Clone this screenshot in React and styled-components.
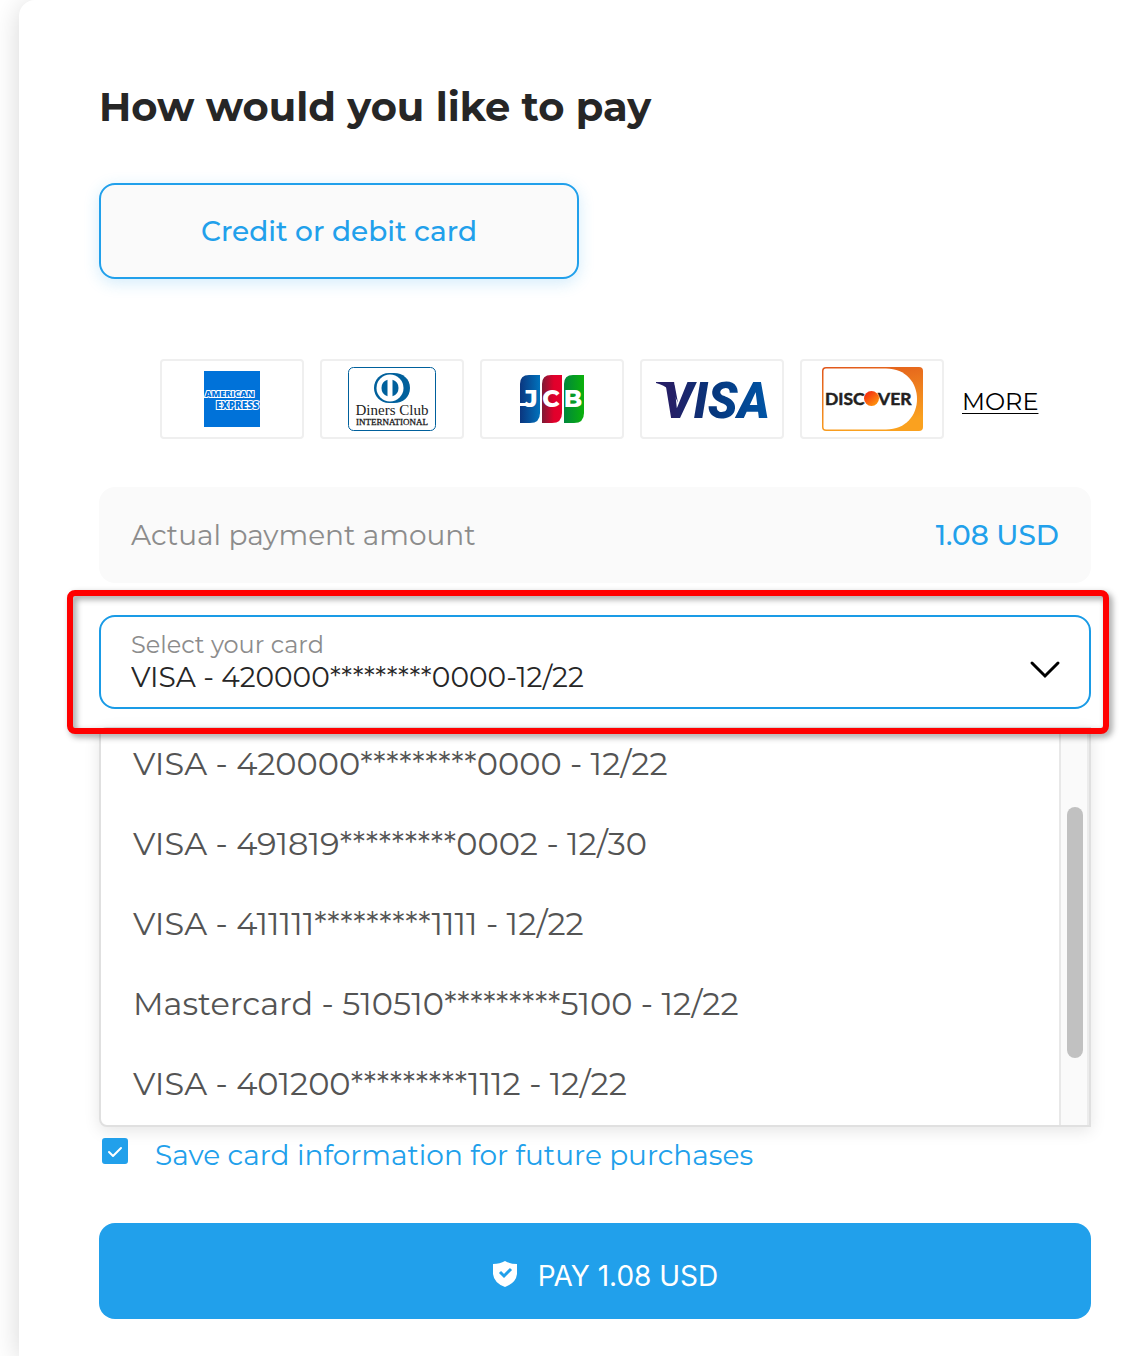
import React, { useState } from "react";
import styled, { createGlobalStyle } from "styled-components";

const blue = "#21a0eb";

const GlobalStyle = createGlobalStyle`
  *, *::before, *::after { box-sizing: border-box; }
  body {
    margin: 0;
    background: #ffffff;
    color: #262626;
    font-family: Montserrat, Inter, "Liberation Sans", sans-serif;
  }
  button, select, input { font: inherit; color: inherit; }
`;

const Page = styled.div`
  padding-left: 19px;
  overflow: hidden;
`;

const Card = styled.form`
  display: flex;
  flex-direction: column;
  min-height: 100vh;
  padding: 81px 49px 37px 80px;
  border-radius: 16px 0 0 0;
  background: #ffffff;
  box-shadow: 0 4px 28px rgba(0, 0, 0, 0.16);
`;

const Title = styled.h1`
  margin: 0;
  font-size: 40px;
  line-height: 52px;
  font-weight: 700;
`;

const MethodButton = styled.button`
  width: 480px;
  max-width: 100%;
  height: 96px;
  margin-top: 50px;
  border: 2px solid ${blue};
  border-radius: 16px;
  background: #fafafa;
  box-shadow: 0 4px 16px rgba(33, 160, 235, 0.2);
  color: ${blue};
  font-size: 28px;
  font-weight: 500;
`;

const Brands = styled.div`
  display: flex;
  align-items: center;
  gap: 16px;
  margin-top: 80px;
  padding-left: 61px;
`;

const Brand = styled.div`
  display: flex;
  align-items: center;
  justify-content: center;
  width: 144px;
  height: 80px;
  border: 2px solid #efefef;
  border-radius: 4px;
  background: #ffffff;
`;

const MoreLink = styled.a`
  padding: 6px 2px 0;
  color: #000000;
  font-size: 24px;
  line-height: 32px;
  text-underline-offset: 3px;
  text-decoration-thickness: 1px;
`;

const AmountBar = styled.div`
  display: flex;
  align-items: center;
  justify-content: space-between;
  height: 96px;
  margin-top: 48px;
  padding: 0 32px;
  border-radius: 16px;
  background: #fafafa;
  color: #8c8c8c;
  font-size: 28px;
`;

const Amount = styled.strong`
  color: ${blue};
  font-weight: 500;
`;

const SelectArea = styled.div`
  position: relative;
  z-index: 1;
  margin-top: 32px;
`;

const SelectBox = styled.div`
  display: grid;
  grid-template-columns: 1fr 32px;
  align-items: center;
  height: 94px;
  padding: 0 28px 0 30px;
  border: 2px solid #1a9be6;
  border-radius: 16px;
  background: #ffffff;
`;

const Field = styled.div`
  display: flex;
  flex-direction: column;
`;

const FieldLabel = styled.label`
  padding-top: 2px;
  color: #8c8c8c;
  font-size: 24px;
  line-height: 28px;
`;

const CardSelect = styled.select`
  width: 100%;
  height: 36px;
  padding: 0;
  border: 0;
  outline: 0;
  appearance: none;
  background: transparent;
  color: #262626;
  font-size: 28px;
`;

const Chevron = styled.svg`
  margin-top: 14px;
  fill: none;
  stroke: #000000;
  stroke-width: 3px;
  stroke-linecap: round;
`;

const Highlight = styled.div`
  position: absolute;
  inset: -25px -18px -25px -32px;
  border: 6px solid #ff0000;
  border-radius: 8px;
  filter: drop-shadow(3px 3px 3px rgba(0, 0, 0, 0.4));
  pointer-events: none;
`;

const Menu = styled.div`
  display: grid;
  grid-template-columns: 1fr 30px;
  height: 400px;
  margin-top: 18px;
  border: 2px solid #e0e0e0;
  border-radius: 8px 0 0 8px;
  background: #ffffff;
  box-shadow: 0 4px 16px rgba(0, 0, 0, 0.1);
`;

const Options = styled.ul`
  display: flex;
  flex-direction: column;
  justify-content: flex-end;
  min-height: 0;
  margin: 0;
  padding: 0 0 1px;
  overflow: hidden;
  list-style: none;
`;

const Option = styled.li`
  flex: none;
  padding: 0 32px;
  color: #545454;
  font-size: 32px;
  line-height: 80px;
  cursor: pointer;
`;

const Track = styled.div`
  padding: 78px 4px 0 6px;
  border-left: 2px solid #e8e8e8;
  border-right: 2px solid #ececec;
  background: #fafafa;
`;

const Thumb = styled.div`
  width: 16px;
  height: 251px;
  border-radius: 8px;
  background: #c1c1c1;
`;

const SaveRow = styled.label`
  display: flex;
  align-items: center;
  gap: 27px;
  margin-top: 10px;
  padding-left: 3px;
  color: ${blue};
  font-size: 28px;
  line-height: 36px;
`;

const CheckHolder = styled.span`
  display: grid;
  width: 26px;
  height: 26px;
  margin-bottom: 8px;

  > * { grid-area: 1 / 1; }
  svg { pointer-events: none; }
`;

const Checkbox = styled.input`
  width: 26px;
  height: 26px;
  margin: 0;
  appearance: none;
  border: 2px solid ${blue};
  border-radius: 3px;

  &:checked { background: ${blue}; }
`;

const PayButton = styled.button`
  display: flex;
  align-items: center;
  justify-content: center;
  gap: 20px;
  height: 96px;
  margin-top: 50px;
  padding: 10px 0 0 20px;
  border: 0;
  border-radius: 16px;
  background: ${blue};
  color: #ffffff;
  font-family: Inter, sans-serif;
  font-size: 28px;
  font-weight: 400;
`;

const Shield = styled.svg`
  margin-bottom: 4px;
`;

const Amex = () => (
  <svg width="56" height="56" viewBox="0 0 56 56" role="img" aria-label="American Express">
    <rect width="56" height="56" fill="#0072d9" />
    <g fontFamily="'Open Sans', sans-serif" fontWeight="800" fill="#0072d9" stroke="#ffffff" strokeWidth="2" paintOrder="stroke">
      <text x="1" y="26" fontSize="9">AMERICAN</text>
      <text x="12" y="38" fontSize="10">EXPRESS</text>
    </g>
  </svg>
);

const Diners = () => (
  <svg width="88" height="64" viewBox="0 0 88 64" role="img" aria-label="Diners Club International">
    <rect x="0.5" y="0.5" width="87" height="63" rx="5" fill="#fff" stroke="#00609c" />
    <path d="M41 6h5c9 0 16 6 16 15s-7 15-16 15h-5c-9 0-15-7-15-15S32 6 41 6Z" fill="#00609c" />
    <circle cx="42" cy="21" r="13.5" fill="#fff" />
    <path d="M39.5 12.8a8.6 8.6 0 0 0 0 16.4ZM44.5 12.8a8.6 8.6 0 0 1 0 16.4Z" fill="#00609c" />
    <g fontFamily="'Liberation Serif', serif" fill="#1c1c1c" textAnchor="middle">
      <text x="44" y="48" fontSize="15">Diners Club</text>
      <text x="44" y="58" fontSize="9" stroke="#1c1c1c" strokeWidth="0.3">INTERNATIONAL</text>
    </g>
  </svg>
);

const Jcb = () => (
  <svg width="64" height="48" viewBox="0 0 64 48" role="img" aria-label="JCB">
    <defs>
      <linearGradient id="jcbBlue"><stop stopColor="#0b367f" /><stop offset="1" stopColor="#0072bc" /></linearGradient>
      <linearGradient id="jcbRed"><stop stopColor="#7d1a35" /><stop offset="0.6" stopColor="#e1002b" /><stop offset="1" stopColor="#e6002d" /></linearGradient>
      <linearGradient id="jcbGreen"><stop stopColor="#00873c" /><stop offset="1" stopColor="#0bb10b" /></linearGradient>
    </defs>
    <path d="M0 9Q0 0 9 0H20V38Q20 48 10 48H0Z" fill="url(#jcbBlue)" />
    <path d="M22 9Q22 0 31 0H42V38Q42 48 32 48H22Z" fill="url(#jcbRed)" />
    <path d="M44 9Q44 0 53 0H64V38Q64 48 54 48H44Z" fill="url(#jcbGreen)" />
    <path d="M0 28H8V31H0Z" fill="#fff" />
    <g fontFamily="Montserrat, 'DejaVu Sans', sans-serif" fontWeight="800" fontSize="24" fill="#fff" textAnchor="middle">
      <text x="11" y="32">J</text>
      <text x="31" y="32">C</text>
      <text x="53" y="32">B</text>
    </g>
  </svg>
);

const Visa = () => (
  <svg width="120" height="48" viewBox="-4 -4 120 48" role="img" aria-label="Visa">
    <defs>
      <linearGradient id="visaInk" gradientUnits="userSpaceOnUse" x1="0" y1="0" x2="112" y2="0">
        <stop offset="0.15" stopColor="#241f66" /><stop offset="0.5" stopColor="#06357b" /><stop offset="1" stopColor="#0055a6" />
      </linearGradient>
    </defs>
    <path d="M0 3H13Q18 3 19 8L22 24Q16 8 0 4Z" fill="url(#visaInk)" />
    <text x="6" y="39" fontFamily="Roboto, sans-serif" fontSize="49" fontWeight="900" fontStyle="italic" fill="url(#visaInk)">VISA</text>
  </svg>
);

const Discover = () => (
  <svg width="101" height="64" viewBox="0 0 101 64" role="img" aria-label="Discover">
    <defs>
      <linearGradient id="discoverEdge" x2="0.3" y2="1"><stop stopColor="#e0561c" /><stop offset="1" stopColor="#faa11f" /></linearGradient>
      <linearGradient id="discoverDot" x2="0.8" y2="1"><stop stopColor="#f21b12" /><stop offset="1" stopColor="#ff9a0c" /></linearGradient>
    </defs>
    <rect width="101" height="64" rx="4" fill="url(#discoverEdge)" />
    <path d="M4 1.5H64C84 1.5 95 16 95 32S84 62.5 64 62.5H4Q1.5 62.5 1.5 60V4Q1.5 1.5 4 1.5Z" fill="#fff" />
    <circle cx="49.5" cy="31.5" r="7.5" fill="url(#discoverDot)" />
    <g fontFamily="Lato, sans-serif" fontSize="17.5" fontWeight="700" fill="#231f20" stroke="#231f20" strokeWidth="0.5">
      <text x="3" y="38">DISC</text>
      <text x="56" y="38">VER</text>
    </g>
  </svg>
);

const CARDS = [
  "VISA - 420000*********0000 - 12/22",
  "VISA - 491819*********0002 - 12/30",
  "VISA - 411111*********1111 - 12/22",
  "Mastercard - 510510*********5100 - 12/22",
  "VISA - 401200*********1112 - 12/22",
];

const BRANDS = [Amex, Diners, Jcb, Visa, Discover];

export default function App() {
  const [selected, setSelected] = useState(0);
  const [save, setSave] = useState(true);

  return (
    <Page>
      <GlobalStyle />
      <Card onSubmit={(e) => e.preventDefault()}>
        <Title>How would you like to pay</Title>
        <MethodButton type="button">Credit or debit card</MethodButton>
        <Brands>
          {BRANDS.map((Logo, i) => <Brand key={i}><Logo /></Brand>)}
          <MoreLink href="#more">MORE</MoreLink>
        </Brands>
        <AmountBar>
          <span>Actual payment amount</span>
          <Amount>1.08 USD</Amount>
        </AmountBar>
        <SelectArea>
          <SelectBox>
            <Field>
              <FieldLabel htmlFor="card">Select your card</FieldLabel>
              <CardSelect id="card" value={selected} onChange={(e) => setSelected(Number(e.target.value))}>
                {CARDS.map((card, i) => (
                  <option key={card} value={i}>{card.replace(/ - (\d\d\/)/, "-$1")}</option>
                ))}
              </CardSelect>
            </Field>
            <Chevron width="32" height="20" viewBox="0 0 32 20" aria-hidden="true">
              <path d="M3 4L16 17L29 4" />
            </Chevron>
          </SelectBox>
          <Highlight />
        </SelectArea>
        <Menu>
          <Options role="listbox" aria-label="Saved cards">
            {CARDS.map((card, i) => (
              <Option key={card} role="option" aria-selected={i === selected} onClick={() => setSelected(i)}>{card}</Option>
            ))}
          </Options>
          <Track><Thumb /></Track>
        </Menu>
        <SaveRow htmlFor="save">
          <CheckHolder>
            <Checkbox id="save" type="checkbox" checked={save} onChange={(e) => setSave(e.target.checked)} />
            <svg width="26" height="26" viewBox="0 0 26 26" fill="none" stroke="#fff" strokeWidth="2" strokeLinecap="round" strokeLinejoin="round" aria-hidden="true">
              <path d="M7 14L11 18L19 10" />
            </svg>
          </CheckHolder>
          <span>Save card information for future purchases</span>
        </SaveRow>
        <PayButton type="submit">
          <Shield width="26" height="28" viewBox="0 0 26 28" aria-hidden="true">
            <path d="M13 1Q18 4 25 4V14Q24 23 13 27Q2 23 1 14V4Q8 4 13 1Z" fill="#fff" />
            <path d="M8 12L12 16L19 9" fill="none" stroke={blue} strokeWidth="3" />
          </Shield>
          PAY 1.08 USD
        </PayButton>
      </Card>
    </Page>
  );
}
